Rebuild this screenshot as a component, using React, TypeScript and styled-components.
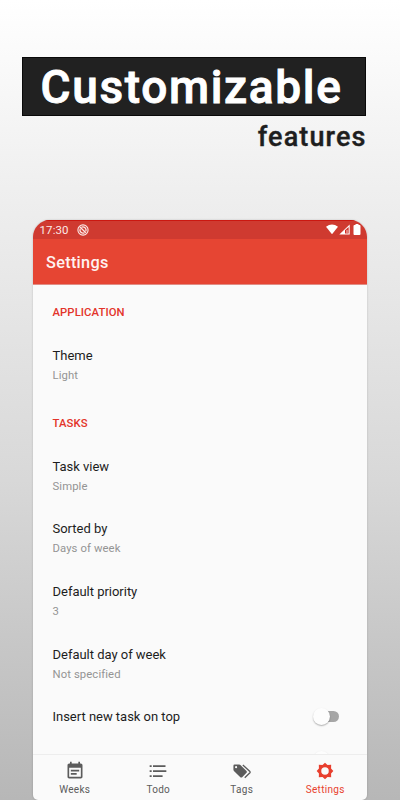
import React from "react";
import styled, { createGlobalStyle } from "styled-components";

const GlobalStyle = createGlobalStyle`
  * { box-sizing: border-box; }
  body { margin: 0; font-family: Roboto, "Liberation Sans", sans-serif; }
`;

const Page = styled.main`
  height: 800px;
  overflow: hidden;
  display: flex;
  flex-direction: column;
  background: linear-gradient(180deg, #ffffff 0%, #f0f0f0 22%, #d8d8d8 60%, #b7b7b7 100%);
`;

const Hero = styled.header`
  height: 220px;
  padding: 57px 34px 0 22px;
  display: flex;
  flex-direction: column;
  flex: none;
`;

const Headline = styled.h1`
  margin: 0;
  height: 59px;
  padding-left: 17.5px;
  border: 1px solid #090909;
  background: #212121;
  color: #fff;
  font-size: 46px;
  font-weight: 500;
  line-height: 58px;
  letter-spacing: 1.65px;
  white-space: nowrap;
  -webkit-text-stroke: 0.9px #fff;
`;

const Subline = styled.p`
  margin: 4px -0.5px 0 0;
  color: #1e1e1e;
  font-size: 27px;
  font-weight: 500;
  line-height: 34px;
  letter-spacing: 1.1px;
  text-align: right;
  -webkit-text-stroke: 0.4px #1e1e1e;
`;

const Phone = styled.section`
  width: 334px;
  height: 580px;
  margin-left: 33px;
  flex: none;
  display: flex;
  flex-direction: column;
  overflow: hidden;
  border-radius: 17px 17px 5px 5px;
  background: #fafafa;
  box-shadow: 0 0 2px rgba(0, 0, 0, 0.22);
`;

const StatusBar = styled.div`
  height: 19px;
  flex: none;
  display: flex;
  align-items: center;
  padding: 0 5px 0 6.5px;
  background: #cf3a30;
  border-top: 1px solid #cb1710;
  color: #fbe9e7;
  font-size: 11.5px;
  letter-spacing: 0.1px;
`;

const StatusIcons = styled.div`
  margin-left: auto;
  display: flex;
  align-items: center;
  gap: 1px;
  transform: translateY(-1px);
`;

const AppBar = styled.div`
  height: 46px;
  flex: none;
  display: flex;
  align-items: center;
  padding: 2px 0 0 13px;
  background: #e64533;
  border-bottom: 1px solid #e08d85;
  color: #fff2f0;
  font-size: 16.3px;
  font-weight: 500;
  letter-spacing: 0.3px;
`;

const List = styled.div`
  flex: 1;
  min-height: 0;
  overflow: hidden;
  padding: 0 28.5px 0 19.5px;
`;

const SectionTitle = styled.h2<{ $height: number }>`
  margin: 0;
  height: ${(p) => p.$height}px;
  padding-top: 5px;
  display: flex;
  align-items: center;
  color: #e3342a;
  font-size: 11.3px;
  font-weight: 500;
  letter-spacing: 0.08px;
`;

const Item = styled.div<{ $compact?: boolean }>`
  height: ${(p) => (p.$compact ? 43.5 : 62.6)}px;
  padding-top: ${(p) => (p.$compact ? 0 : 1.8)}px;
  display: flex;
  align-items: center;
  justify-content: space-between;
`;

const ItemLabel = styled.div`
  color: #1d1d1d;
  font-size: 13px;
  line-height: 20px;
  letter-spacing: -0.02px;
`;

const ItemValue = styled.div`
  color: #949494;
  font-size: 11.3px;
  line-height: 20px;
  letter-spacing: 0.1px;
`;

const Track = styled.span`
  width: 25px;
  height: 11px;
  margin-top: -1px;
  display: flex;
  align-items: center;
  border-radius: 6px;
  background: #a6a6a6;
`;

const Thumb = styled.span`
  width: 17px;
  height: 17px;
  margin-left: -1px;
  flex: none;
  border-radius: 50%;
  background: #fdfdfd;
  box-shadow: 0 1px 1.5px rgba(0, 0, 0, 0.3);
`;

const BottomNav = styled.nav`
  height: 46px;
  flex: none;
  display: grid;
  grid-template-columns: repeat(4, 1fr);
  border-top: 1px solid #ededed;
`;

const Tab = styled.div<{ $active?: boolean }>`
  display: flex;
  flex-direction: column;
  align-items: center;
  gap: 1px;
  padding-top: 6px;
  color: ${(p) => (p.$active ? "#e83f2e" : "#5c5c5c")};
  font-size: 10px;
  line-height: 15px;
  letter-spacing: 0.3px;
  svg { flex: none; }
`;

const NotificationIcon = styled.svg`
  margin-left: 8px;
`;

const Glyph = ({ children }: { children: React.ReactNode }) => (
  <svg width="20" height="20" viewBox="0 0 24 24" fill="currentColor">{children}</svg>
);

const Switch = () => <Track><Thumb /></Track>;

const taskItems = [
  ["Task view", "Simple"],
  ["Sorted by", "Days of week"],
  ["Default priority", "3"],
  ["Default day of week", "Not specified"],
];

const Preference = ({ label, value }: { label: string; value: string }) => (
  <Item>
    <div>
      <ItemLabel>{label}</ItemLabel>
      <ItemValue>{value}</ItemValue>
    </div>
  </Item>
);

export default function App() {
  return (
    <Page>
      <GlobalStyle />
      <Hero>
        <Headline>Customizable</Headline>
        <Subline>features</Subline>
      </Hero>
      <Phone>
        <StatusBar>
          17:30
          <NotificationIcon width="12" height="12" viewBox="0 0 12 12" fill="none" stroke="#fbe9e7">
            <circle cx="6" cy="6" r="5.1" strokeWidth="1.1" />
            <path d="M3 3 8.800 8.800M4.600 3.200a3.200 3.200 0 0 1 4.300 4M3.200 4.800a3.100 3.100 0 0 0 4.200 4" strokeWidth="1.300" />
          </NotificationIcon>
          <StatusIcons>
            <svg width="12" height="11" viewBox="0 0 12 11" fill="#fff"><path d="M0 2.700Q6-1.600 12 2.700L6 10.200z" /></svg>
            <svg width="12" height="11" viewBox="0 0 12 11">
              <path d="M.3 10.500 10.700.5v10z" fill="#fff" />
              <path d="M6 6.200 9.600 2.900v6.600H6z" fill="#cf2a22" />
              <path d="M8 5.800v3.400" stroke="#fff" strokeWidth=".8" />
            </svg>
            <svg width="10" height="11" viewBox="0 0 10 11" fill="#fff"><path d="M3.500 0h3v1h1q1 0 1 1v8q0 1-1 1h-5q-1 0-1-1V2q0-1 1-1h1z" /></svg>
          </StatusIcons>
        </StatusBar>
        <AppBar>Settings</AppBar>
        <List>
          <SectionTitle $height={49}>APPLICATION</SectionTitle>
          <Preference label="Theme" value="Light" />
          <SectionTitle $height={48}>TASKS</SectionTitle>
          {taskItems.map(([label, value]) => (
            <Preference key={label} label={label} value={value} />
          ))}
          <Item $compact><ItemLabel>Insert new task on top</ItemLabel><Switch /></Item>
          <Item $compact><span /><Switch /></Item>
        </List>
        <BottomNav>
          <Tab>
            <Glyph><path d="M17 10.500H7v2h10v-2zm2-7.500h-1V1h-2v2H8V1H6v2H5c-1.100 0-2 .9-2 2v14c0 1.100.9 2 2 2h14c1.100 0 2-.9 2-2V5c0-1.100-.9-2-2-2zm0 16H5V8h14v11zm-5-4.500H7v2h7v-2z" /></Glyph>
            Weeks
          </Tab>
          <Tab>
            <Glyph><path d="M2 5h2.400v2.200H2zM6 5h15v2.200H6zM2 11h2.400v2.200H2zM6 11h16v2.200H6zM2 17h2.400v2.200H2zM6 17h11.500v2.200H6z" /></Glyph>
            Todo
          </Tab>
          <Tab>
            <Glyph>
              <path fillRule="evenodd" d="M2.300 4.200h6.400q.8 0 1.400.6l7.300 7.200q1.100 1.100 0 2.200l-5.200 5.200q-1.100 1.100-2.200 0L2.300 12q-.6-.6-.6-1.400V5.600q0-1.400 1.400-1.400zm2.600 1.900a1.300 1.300 0 1 0 0 2.600 1.300 1.300 0 0 0 0-2.600z" />
              <path d="m13 4.800 8.200 7.500q1.100 1.100 0 2.200l-5.900 5.600" fill="none" stroke="currentColor" strokeWidth="1.600" />
            </Glyph>
            Tags
          </Tab>
          <Tab $active>
            <Glyph>
              <path fillRule="evenodd" d="m12 2 3 2.700 4.400-.1-.1 4.400L22 12l-2.700 3 .1 4.400-4.400-.1-3 2.700-3-2.700-4.400.1.100-4.400L2 12l2.700-3-.1-4.400 4.400.1zM12 7.500a4.500 4.500 0 1 0 0 9 4.500 4.500 0 0 0 0-9z" />
            </Glyph>
            Settings
          </Tab>
        </BottomNav>
      </Phone>
    </Page>
  );
}
